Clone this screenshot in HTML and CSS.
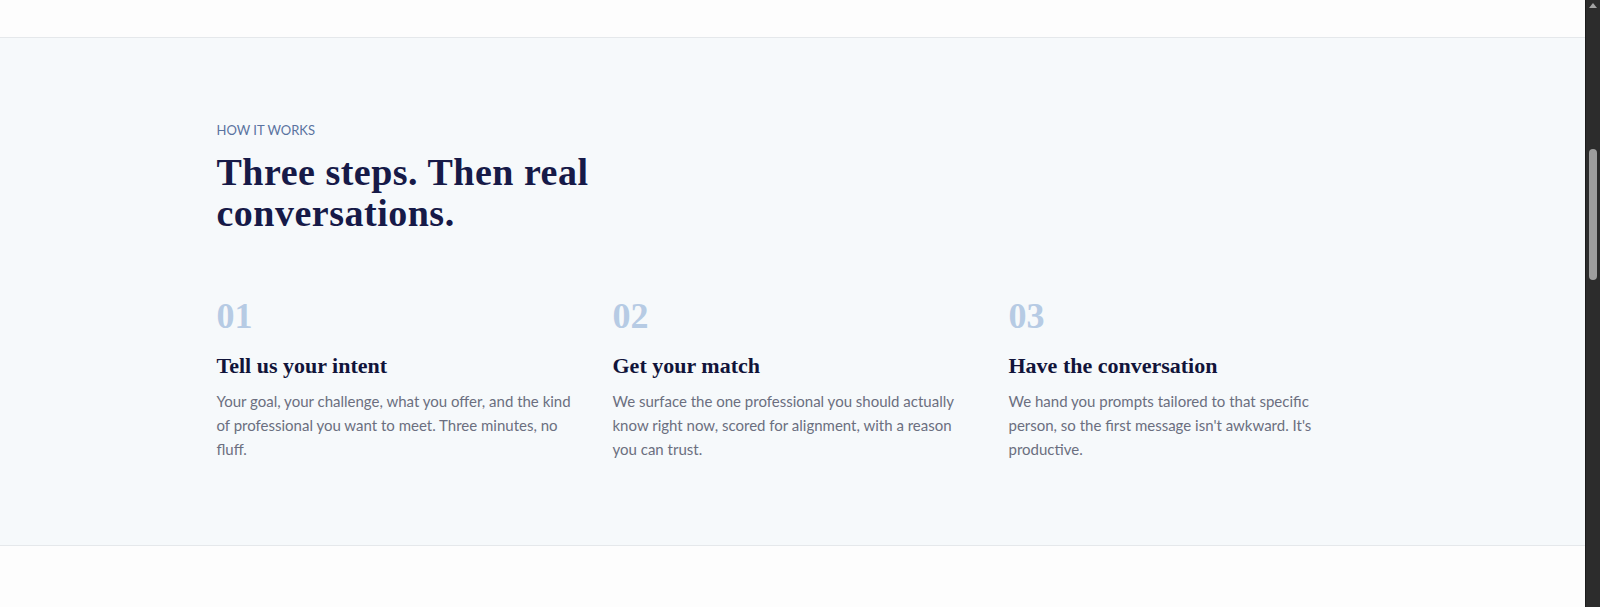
FILE: index.html
```html
<!DOCTYPE html>
<html lang="en">
<head>
    <meta charset="UTF-8">
    <meta name="viewport" content="width=device-width, initial-scale=1.0">
    <title>How it works</title>
    <link rel="stylesheet" href="styles.css">
</head>
<body>
    <div class="page">
        <div class="top-band"></div>

        <section class="how-it-works">
            <div class="container">
                <p class="eyebrow">HOW IT WORKS</p>
                <h2 class="section-title">Three steps. Then real conversations.</h2>

                <div class="steps">
                    <div class="step">
                        <div class="step-number">01</div>
                        <h3>Tell us your intent</h3>
                        <p>Your goal, your challenge, what you offer, and the kind of professional you want to meet. Three minutes, no fluff.</p>
                    </div>
                    <div class="step">
                        <div class="step-number">02</div>
                        <h3>Get your match</h3>
                        <p>We surface the one professional you should actually know right now, scored for alignment, with a reason you can trust.</p>
                    </div>
                    <div class="step">
                        <div class="step-number">03</div>
                        <h3>Have the conversation</h3>
                        <p>We hand you prompts tailored to that specific<br>person, so the first message isn't awkward. It's productive.</p>
                    </div>
                </div>
            </div>
        </section>

        <section class="next-section"></section>
    </div>

    <!-- window scrollbar -->
    <div class="scrollbar">
        <span class="scroll-arrow"></span>
        <span class="scroll-thumb"></span>
    </div>
</body>
</html>
```

FILE: styles.css
```css
body {
    margin: 0;
    font-family: "Lato", "Inter", sans-serif;
    background: #fdfdfd;
    color: #11143a;
}
.page {
    margin-right: 15px;
}
.top-band {
    height: 37px;
    background: #fdfdfd;
}
.how-it-works {
    background: #f6f9fb;
    border-top: 1px solid #e5e8eb;
    border-bottom: 1px solid #e5e8eb;
    padding: 82px 0 84px;
}
.container {
    max-width: 1152px;
    margin: 0 auto;
}
.eyebrow {
    margin: 0 0 12px;
    font-size: 13px;
    color: #5a73a0;
    line-height: 20px;
}
.section-title {
    margin: 0;
    max-width: 420px;
    font-family: "Liberation Serif", serif;
    font-weight: bold;
    font-size: 38px;
    line-height: 41px;
    letter-spacing: 0.5px;
    color: #161a48;
}
.steps {
    display: grid;
    grid-template-columns: repeat(3, 1fr);
    gap: 36px;
    margin-top: 62px;
}
.step-number {
    font-family: "Liberation Serif", serif;
    font-weight: bold;
    font-size: 36px;
    line-height: 40px;
    color: #b6cbe4;
}
.step h3 {
    margin: 16px 0 9px;
    font-family: "Liberation Serif", serif;
    font-weight: bold;
    font-size: 22px;
    line-height: 28px;
    color: #11143a;
}
.step p {
    margin: 0;
    font-size: 15px;
    line-height: 24px;
    color: #6b6f80;
}
.next-section {
    height: 2100px;
    background: #fdfdfd;
}

/* window scrollbar */
.scrollbar {
    position: fixed;
    top: 0;
    right: 0;
    width: 15px;
    height: 100%;
    background: #2c2c2c;
    border-left: 1px solid #1c1c1c;
    box-sizing: border-box;
}
.scroll-arrow {
    position: absolute;
    top: 3px;
    left: 3px;
    border-left: 4px solid transparent;
    border-right: 4px solid transparent;
    border-bottom: 5px solid #a3a3a3;
}
.scroll-thumb {
    position: absolute;
    top: 149px;
    left: 3px;
    width: 8px;
    height: 131px;
    border-radius: 4px;
    background: #9e9e9e;
}
```
